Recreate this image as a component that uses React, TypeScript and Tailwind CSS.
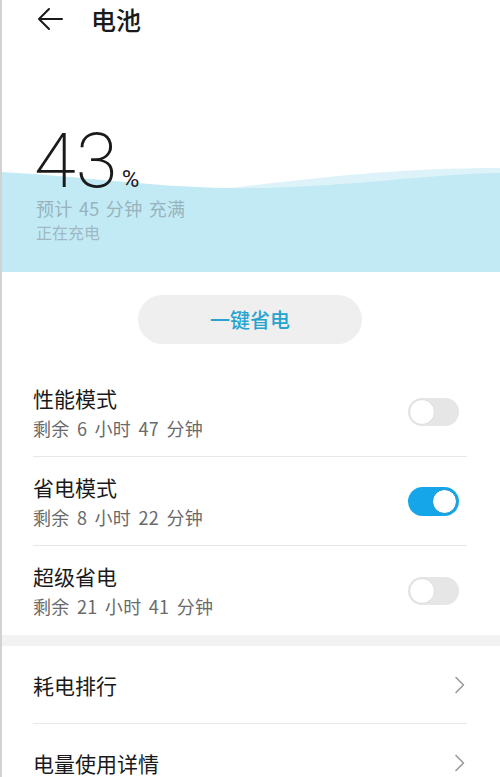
import React from "react";

const cjk = { fontFamily: '"Noto Sans CJK SC", "Noto Sans", sans-serif' };

function Toggle({ on }: { on: boolean }) {
  return on ? (
    <div className="w-[51px] h-[29px] rounded-full bg-[#15a6ea] flex items-center justify-end pr-[2px]">
      <div className="w-[25px] h-[25px] rounded-full bg-white border border-[#0e8fd0]" />
    </div>
  ) : (
    <div className="w-[51px] h-[28px] rounded-full bg-[#e6e6e6] flex items-center pl-[1px]">
      <div className="w-[26px] h-[26px] rounded-full bg-white border border-[#dcdcdc]" />
    </div>
  );
}

function ModeRow({ title, sub, on, border }: { title: string; sub: string; on: boolean; border: boolean }) {
  return (
    <div className={`h-[89px] flex items-center justify-between ${border ? "border-b border-[#e8e8e8]" : ""}`}>
      <div className="flex flex-col pt-[1px]">
        <div className="text-[21px] leading-[28px] text-[#1a1a1a]">{title}</div>
        <div className="text-[18px] leading-[28px] mt-[2px] text-[#6a6a6a] [word-spacing:3px] tracking-[0.3px]">{sub}</div>
      </div>
      <div className="mr-[8px]">
        <Toggle on={on} />
      </div>
    </div>
  );
}

function NavRow({ title, border }: { title: string; border: boolean }) {
  return (
    <div className={`h-[78px] flex items-center justify-between ${border ? "border-b border-[#e8e8e8]" : ""}`}>
      <div className="text-[21px] leading-[28px] text-[#1a1a1a]">{title}</div>
      <svg width="12" height="18" viewBox="0 0 12 18" className="mr-[1px]">
        <path d="M2 1.5 L9.5 9 L2 16.5" fill="none" stroke="#9a9a9a" strokeWidth="1.6" strokeLinecap="round" strokeLinejoin="round" />
      </svg>
    </div>
  );
}

export default function App() {
  return (
    <div className="w-[500px] h-[777px] overflow-hidden bg-white border-l-2 border-[#d2d2d2]" style={cjk}>
      {/* header */}
      <div className="h-[38px] flex items-center pl-[34px] gap-[27px]">
        <svg width="28" height="26" viewBox="0 0 28 26">
          <path d="M26 13 H3 M13 3 L3 13 L13 23" fill="none" stroke="#1a1a1a" strokeWidth="2" strokeLinecap="round" strokeLinejoin="round" />
        </svg>
        <div className="text-[25px] leading-[32px] font-medium text-[#1a1a1a]">电池</div>
      </div>

      {/* hero */}
      <div className="relative h-[234px]">
        <svg className="absolute inset-0" width="498" height="234" viewBox="0 0 498 234" preserveAspectRatio="none">
          <path d="M190,154 C290,144 370,130 498,130 L498,234 L190,234 Z" fill="#def3f9" />
          <path d="M0,134 C90,139 170,152 260,150 C350,148 430,136 498,135 L498,234 L0,234 Z" fill="#c2eaf5" />
        </svg>
        <div className="relative pl-[32px] pt-[92px]">
          <div className="flex items-baseline h-[62px]">
            <span className="text-[76px] leading-[62px] text-[#1a1a1a]" style={{ fontFamily: "Roboto, sans-serif", fontWeight: 200 }}>
              43
            </span>
            <span className="text-[24px] leading-[24px] ml-[4px] text-[#1a1a1a]" style={{ fontFamily: "Roboto, sans-serif" }}>
              %
            </span>
          </div>
          <div className="mt-[4px] text-[18px] leading-[24px] text-[#98b3bd] pl-[2px] [word-spacing:2px] tracking-[0.3px]">预计 45 分钟 充满</div>
          <div className="text-[16px] leading-[24px] text-[#9fb8c1] pl-[2px]">正在充电</div>
        </div>
      </div>

      {/* button */}
      <div className="pt-[23px] flex justify-center">
        <div className="w-[224px] h-[49px] rounded-full bg-[#efefef] flex items-center justify-center -ml-[2px]">
          <span className="text-[20px] font-medium text-[#27a3ce]">一键省电</span>
        </div>
      </div>

      {/* modes */}
      <div className="mt-[24px] ml-[31px] mr-[33px]">
        <ModeRow title="性能模式" sub="剩余 6 小时 47 分钟" on={false} border />
        <ModeRow title="省电模式" sub="剩余 8 小时 22 分钟" on border />
        <ModeRow title="超级省电" sub="剩余 21 小时 41 分钟" on={false} border={false} />
      </div>

      <div className="h-[11px] bg-[#f2f2f2]" />

      <div className="ml-[31px] mr-[33px]">
        <NavRow title="耗电排行" border />
        <NavRow title="电量使用详情" border={false} />
      </div>
    </div>
  );
}
